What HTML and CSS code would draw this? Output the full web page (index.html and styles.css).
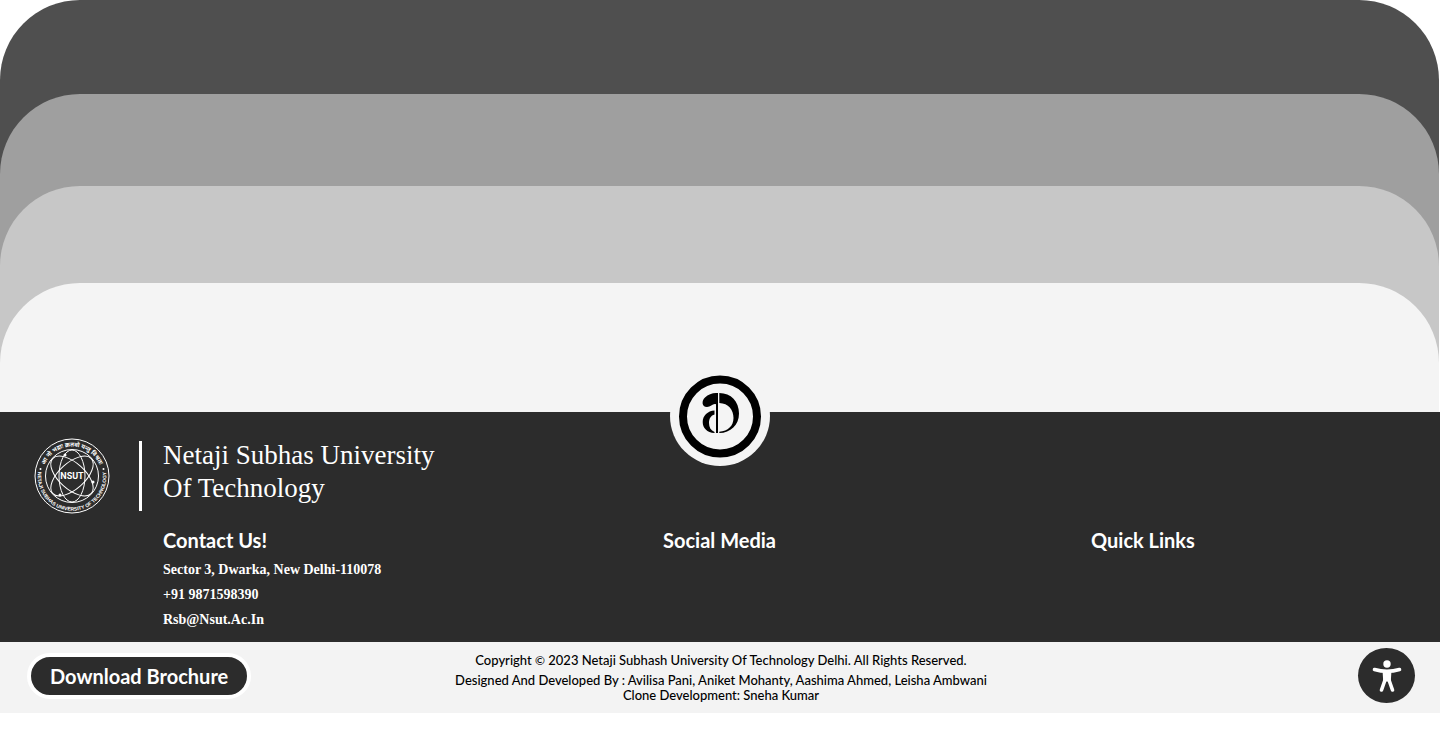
FILE: index.html
```html
<!DOCTYPE html>
<html lang="en">
<head>
<meta charset="utf-8">
<meta name="viewport" content="width=device-width, initial-scale=1">
<title>Netaji Subhas University Of Technology</title>
<link rel="stylesheet" href="styles.css">
</head>
<body>
<main class="layer layer-dark">
  <div class="layer layer-mid">
    <div class="layer layer-light">
      <div class="layer layer-pale"></div>
    </div>
  </div>
</main>
<footer class="footer">
  <a class="badge" href="#" aria-label="Back to top">
    <svg viewBox="0 0 100 100" width="100" height="100" aria-hidden="true">
      <circle cx="50" cy="50.5" r="37" fill="none" stroke="#000" stroke-width="8"/>
      <path d="M46 27h2v40h-2V38.300c-3-1.300-5 2.700-9 2.700-5.500 0-5.500-6.500-2-9.500 3-3 7-4.500 11-4.500z"/>
      <path d="M44.500 44.500v4c-3.500 1-5.500 4-5.500 8.500 0 4.500 2 7.500 5.500 9v1C37 66.500 32.700 62 32.700 56c0-6.500 5-11 11.800-11.500z"/>
      <path d="M49.300 27C61 27 69 35.500 69 47.500 69 59 60.500 67 49.300 67v-1.200C58 65 63.500 60 63.500 52c0-8.500-5-14.500-14.200-15z"/>
    </svg>
  </a>
  <div class="brand">
    <svg class="seal" viewBox="0 0 76 76" width="76" height="76" role="img" aria-label="NSUT seal">
      <defs>
        <path id="arc-top" d="M8.500 38a29.500 29.500 0 0 1 59 0"/>
        <path id="arc-bottom" d="M4.500 31a34.300 34.300 0 1 0 67 0"/>
      </defs>
      <g fill="none" stroke="#fff">
        <circle cx="38" cy="38" r="37"/>
        <circle cx="38" cy="38" r="26.500"/>
        <ellipse cx="38" cy="38" rx="26" ry="13" transform="rotate(42 38 38)"/>
        <ellipse cx="38" cy="38" rx="26" ry="13" transform="rotate(138 38 38)"/>
        <ellipse cx="38" cy="38" rx="13" ry="26"/>
      </g>
      <rect class="seal-plate" x="27" y="33" width="22" height="10"/>
      <g fill="#fff">
        <circle cx="31" cy="17" r="1.500"/><circle cx="26" cy="57" r="1.500"/><circle cx="59" cy="44" r="1.500"/>
        <circle cx="6.500" cy="31" r="1"/><circle cx="69.500" cy="31" r="1"/>
      </g>
      <text class="seal-name" x="38" y="41" text-anchor="middle">NSUT</text>
      <text class="seal-motto"><textPath href="#arc-top" startOffset="50%" text-anchor="middle">आ नो भद्राः क्रतवो यन्तु विश्वतः</textPath></text>
      <text class="seal-ring"><textPath href="#arc-bottom" startOffset="50%" text-anchor="middle">NETAJI SUBHAS UNIVERSITY OF TECHNOLOGY</textPath></text>
    </svg>
    <div class="divider"></div>
    <h1 class="brand-name">Netaji Subhas University<br>Of Technology</h1>
  </div>
  <div class="columns">
    <section>
      <h2 class="heading">Contact Us!</h2>
      <address class="contact">
        <p>Sector 3, Dwarka, New Delhi-110078</p>
        <p>+91 9871598390</p>
        <p>Rsb@Nsut.Ac.In</p>
      </address>
    </section>
    <section><h2 class="heading">Social Media</h2></section>
    <section><h2 class="heading">Quick Links</h2></section>
  </div>
</footer>
<div class="bottom">
  <button class="brochure" type="button">Download Brochure</button>
  <div class="credits">
    <p class="copyright">Copyright <span class="mark">©</span> 2023 Netaji Subhash University Of Technology Delhi. All Rights Reserved.</p>
    <p>Designed And Developed By : Avilisa Pani, Aniket Mohanty, Aashima Ahmed, Leisha Ambwani<br>Clone Development: Sneha Kumar</p>
  </div>
  <button class="access" type="button" aria-label="Accessibility options">
    <svg viewBox="0 0 30 34" width="30" height="34" aria-hidden="true">
      <circle cx="15" cy="5" r="3.700" fill="#fff"/>
      <path d="M2.500 10.500c8 2.300 17 2.300 25 0M13 21L9.500 31M17 21l3.500 10" fill="none" stroke="#fff" stroke-width="3.600" stroke-linecap="round"/>
      <path d="M10.500 11h9l-.7 11.500h-7.600z" fill="#fff"/>
    </svg>
  </button>
</div>
</body>
</html>
```
FILE: styles.css
```css
* { box-sizing: border-box; }
body { margin: 0; background: #fff; color: #000; font-family: Lato, sans-serif; }
h1, h2, p { margin: 0; }

.layer { border-radius: 80px 80px 0 0; }
.layer-dark { margin-right: 1px; padding-top: 94px; background: #4f4f4f; }
.layer-mid { padding-top: 92px; background: #9f9f9f; }
.layer-light { padding-top: 97px; background: #c7c7c7; }
.layer-pale { height: 129px; background: #f4f4f4; }

.footer { position: relative; padding: 26px 0 10px 34px; background: #2c2c2c; color: #fff; }
.badge { position: absolute; top: -46px; left: 50%; margin-left: -50px; width: 100px; height: 100px; border-radius: 50%; background: #f4f4f4; }
.badge svg { display: block; }

.brand { display: flex; align-items: center; }
.seal-plate { fill: #2c2c2c; }
.seal-name { fill: #fff; font: bold 9px Roboto, sans-serif; }
.seal-motto { fill: #fff; font: bold 6px "Noto Sans Devanagari", "Noto Sans", sans-serif; }
.seal-ring { fill: #fff; font: bold 5px "Liberation Sans", sans-serif; }
.divider { width: 3px; height: 70px; margin: 0 21px 0 29px; background: #fff; }
.brand-name { padding-bottom: 8px; font: 500 27px/33px "Liberation Serif", serif; }

.columns { display: grid; grid-template-columns: 500fr 428fr 349fr; margin: 12px 0 0 129px; }
.heading { font-size: 20px; line-height: 28px; font-weight: 700; }
.contact { margin-top: 3px; font: bold 14px/25px "Liberation Serif", serif; }

.bottom { display: grid; grid-template-columns: 1fr auto 1fr; align-items: center; padding: 6px 25px 10px 27px; background: #f3f3f3; }
.brochure { justify-self: start; height: 46px; padding: 0 19px; border: 4px solid #fff; border-radius: 23px; background: #2c2c2c; color: #fff; font: bold 20px/24px Lato, sans-serif; }
.credits { padding-top: 5px; text-align: center; font-size: 13px; line-height: 15px; font-weight: 500; }
.copyright { margin-bottom: 5px; }
.mark { font-size: 12px; }
.access { justify-self: end; display: grid; place-items: center; width: 57px; height: 55px; padding: 0; border: 0; border-radius: 50%; background: #2c2c2c; }
```
